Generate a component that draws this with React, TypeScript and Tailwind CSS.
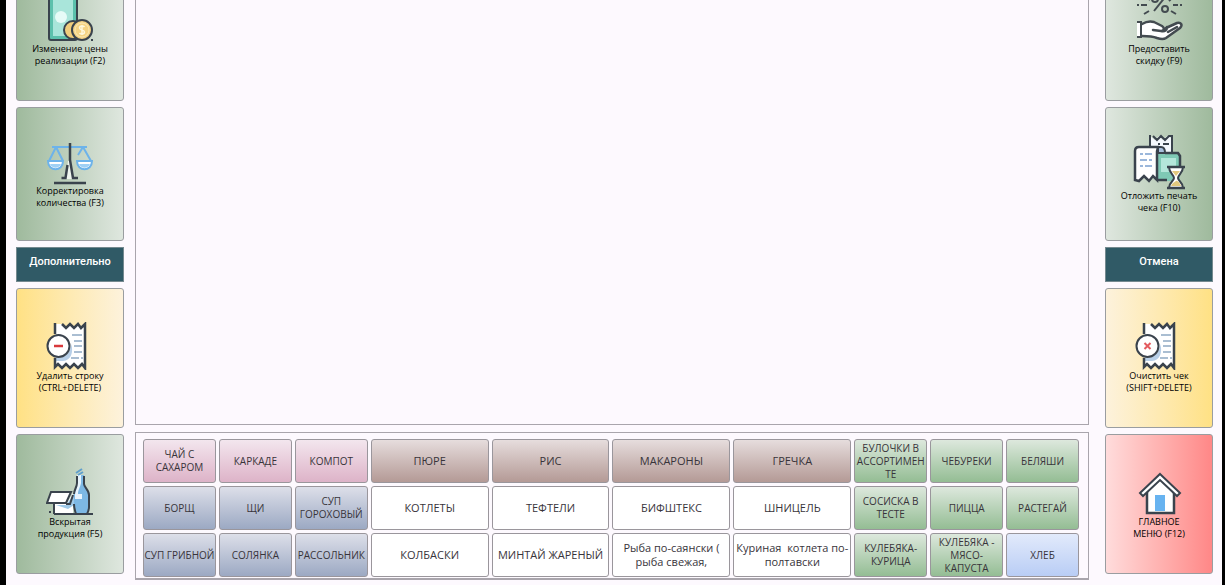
import type { ReactNode } from "react";
import clsx from "clsx";

const INK = "#3a434d";

function BanknoteIcon() {
  return (
    <svg width="48" height="48" viewBox="0 0 48 48" fill="none">
      <rect x="3" y="-4" width="28" height="49" rx="2" fill="#5cc0ac" stroke={INK} strokeWidth="2" />
      <rect x="7" y="0" width="20" height="41" fill="#a9e5da" />
      <circle cx="15" cy="22" r="6" fill="#e6fbf7" />
      <circle cx="27" cy="35" r="9" fill="#f0cd7c" stroke={INK} strokeWidth="2" />
      <circle cx="36" cy="35" r="10" fill="#f5d384" stroke={INK} strokeWidth="2" />
      <circle cx="36" cy="35" r="7" stroke="#fbe9b6" strokeWidth="1" />
      <path d="M38.500 32c-1-1.500-5-1.500-5 1s5 1.500 5 4-4 2.500-5 1M36 30v10" stroke="#fff8dc" strokeWidth="1.500" />
      <path d="M45 45h2" stroke={INK} strokeWidth="2" />
    </svg>
  );
}

function ScalesIcon() {
  return (
    <svg width="48" height="46" viewBox="0 0 48 46" fill="none">
      <path d="M6 8h35M10 8L3 22M10 8l7 14M37 8l-5 8M37 8l8 14" stroke="#6db3ea" strokeWidth="2" />
      <path d="M2 22h15c0 11-15 11-15 0zM31 22h15c0 11-15 11-15 0z" fill="#fff" stroke="#6db3ea" strokeWidth="2" />
      <path d="M4 25h11c-2 5-9 5-11 0zM33 25h11c-2 5-9 5-11 0z" fill="#9fd0f5" />
      <path d="M22 22h3l2 18h-7z" fill="#eef5ee" />
      <path d="M24 4v17l3 18h5M21.500 26l-2 13h-4" stroke={INK} strokeWidth="2.500" />
      <path d="M8 44h32" stroke={INK} strokeWidth="2.500" />
    </svg>
  );
}

function ReceiptIcon({ children }: { children: ReactNode }) {
  return (
    <svg width="48" height="48" viewBox="0 0 48 48" fill="none">
      <path d="M9 2h7l4 4 4-4 4 4 4-4 4 4 3-4v43l-4-3-4 3-4-3-4 3-4-3-4 3-3-3-3 2z" fill="#fff" />
      <path d="M10 36c10 0 15-6 15-14 3 7 0 17-8 17h-7z" fill="#b7cfe8" />
      <path d="M26 13h10M28 19h8M28 24h8M28 30h8M25 36h8M35 36h2" stroke="#8fa9c4" strokeWidth="1.500" />
      <path
        d="M9 1v11M16 2l4 4 4-4 4 4 4-4 3 4 4-4v44l-3-4-4 4-4-4-4 4-4-4-4 4-4-4-3 3v-9"
        stroke={INK}
        strokeWidth="2.500"
      />
      <circle cx="12.500" cy="24" r="11" fill="#fff" stroke={INK} strokeWidth="2" />
      {children}
    </svg>
  );
}

function BottleIcon() {
  return (
    <svg width="48" height="48" viewBox="0 0 48 48" fill="none">
      <path d="M8 35h13l6-10v21H8z" fill="#fff" />
      <path d="M10 37h10l8-11v11l-6 4z" fill="#9fcaea" />
      <path d="M5 24h20l-5 11H1z" fill="#fff" stroke={INK} strokeWidth="2" />
      <path d="M8 36v10M20 36h4l3-9" stroke={INK} strokeWidth="2" />
      <path d="M31 7h7v9c0 3 5 6 5 11v12c0 3-1 5-2 7H30c-1-3-2-5-2-8V26c0-4 3-7 3-11z" fill="#7db8e4" />
      <path d="M31 7h4v8c-1 5-3 7-3 11h4v5h-7v-5c0-4 2-7 2-11z" fill="#e8f4fd" />
      <path
        d="M31 8v7c0 4-3 7-3 11M38 8v8c0 3 5 6 5 11v12c0 3-1 5-2 7M28 36c0 4 1 7 2 10"
        stroke={INK}
        strokeWidth="2"
      />
      <path d="M30 5l6-4M32 7l5-3" stroke="#5f9fcc" strokeWidth="2" />
      <path d="M3 44h2M8 46h39" stroke={INK} strokeWidth="2" />
    </svg>
  );
}

function DiscountIcon() {
  return (
    <svg width="48" height="48" viewBox="0 0 48 48" fill="none" stroke="#434b50" strokeWidth="2">
      <path d="M2 10h2M6 10h6M38 10h5M45 10h2M9 19l5-3M36 16l5 3M12 2l3 3M37 3l-3 3" />
      <path d="M31 1L19 16" />
      <circle cx="20" cy="4" r="3" />
      <circle cx="30" cy="14" r="3" />
      <path d="M2 27h5v15H2z" fill="#fff" stroke="none" />
      <path d="M2 27h4v15H2" />
      <path
        d="M7 29c5-3 9-3 12-2l8 4 6 2 9-5c4-1 6 2 3 5L31 43c-3 2-6 1-9 0-5-2-10-2-15-2z"
        fill="#fff"
        stroke="none"
      />
      <path
        d="M7 29c5-3 9-3 12-2l8 4c3 2 2 5-1 5l-8-1M31 33l11-5c4-1 6 2 3 5L31 43c-3 2-6 1-9 0-5-2-10-2-15-2M26 36c4 1 6-1 6-4M33 37l9-5"
        strokeWidth="2.500"
        strokeLinecap="round"
        strokeLinejoin="round"
      />
    </svg>
  );
}

function PostponeIcon() {
  return (
    <svg width="52" height="56" viewBox="0 0 52 56" fill="none">
      <path d="M17 2l5 4 4-4 4 4 4-4 5 2v18H17z" fill="#f4f8fd" />
      <path d="M17 13V1M20 2l4 4 4-4 4 4 4-4h3v16M25 10h2M30 10h6" stroke={INK} strokeWidth="2" />
      <path d="M25 19h20l2 2v26H25z" fill="#7fc9b5" />
      <path d="M28 24h15v14H28z" fill="#b4e6da" />
      <path d="M32 19h13l2 3v10M25 46h9" stroke={INK} strokeWidth="2.500" />
      <path d="M25 13h3c3 0 4 3 4 6h-7z" fill="#a8bfdc" stroke={INK} strokeWidth="2" />
      <path
        d="M2 46V17c0-3 2-4 4-4h20c-2 1-2 3-2 6v27l-4-4-4 5-5-5-5 5z"
        fill="#fff"
        stroke={INK}
        strokeWidth="2.500"
      />
      <path d="M7 20h3M12 20h7M7 26h7M16 26h3M7 32h3M12 32h7" stroke="#7ba0d0" strokeWidth="1.500" />
      <path
        d="M36 33h14c0 6-5 8-5 11s5 4 5 10H36c0-6 5-7 5-10s-5-5-5-11z"
        fill="#fff"
        stroke={INK}
        strokeWidth="2"
      />
      <path d="M39 37h8l-4 5zM38 52c1-3 4-4 5-5s4 2 5 5z" fill="#e2c87e" />
      <path d="M34 33h18M34 54h18" stroke={INK} strokeWidth="2.500" />
    </svg>
  );
}

function HomeIcon() {
  return (
    <svg width="48" height="48" viewBox="0 0 48 48" fill="none">
      <path d="M12 22L25 11l14 11v23H12z" fill="#fff" stroke={INK} strokeWidth="2.500" />
      <path d="M25 6l20 19-3 3-17-16L8 28l-3-3z" fill="#fff" stroke={INK} strokeWidth="2" />
      <rect x="20" y="27" width="10" height="16" fill="#67b3f0" />
    </svg>
  );
}

const tones = {
  greenLeft: "bg-linear-to-r from-[#9fba9d] to-[#dfe7df]",
  greenRight: "bg-linear-to-l from-[#9fba9d] to-[#dfe7df]",
  yellowLeft: "bg-linear-to-r from-[#ffe184] to-[#fdf2dc]",
  yellowRight: "bg-linear-to-l from-[#ffe184] to-[#fdf2dc]",
  red: "bg-linear-to-l from-[#ff8787] to-[#ffdcdc]",
};

interface ActionProps {
  tone: keyof typeof tones;
  icon: ReactNode;
  lines: [string, string];
  short?: boolean;
}

function Action({ tone, icon, lines, short }: ActionProps) {
  return (
    <button
      type="button"
      className={clsx(
        "flex shrink-0 flex-col items-center justify-center rounded-[3px] border border-[#9a9da0] text-[9px] leading-[12px] font-medium text-black",
        short ? "h-[134px]" : "h-[140px]",
        tones[tone],
      )}
    >
      {icon}
      <span>{lines[0]}</span>
      <span>{lines[1]}</span>
    </button>
  );
}

function SectionTitle({ children }: { children: ReactNode }) {
  return (
    <h2 className="flex h-[35px] shrink-0 items-center justify-center border border-[#75898f] bg-[#305a66] pb-1 font-['Roboto',sans-serif] text-[11px] font-medium text-white">
      {children}
    </h2>
  );
}

const dishTones = {
  pink: "bg-linear-to-b from-[#f3e6ee] to-[#ddb3c8] text-[10px] leading-[13px]",
  blue: "bg-linear-to-b from-[#dddfe9] to-[#9ca9c3] text-[10px] leading-[13px]",
  brown: "bg-linear-to-b from-[#e6dddd] to-[#b49a96] text-[11px] leading-[14px]",
  white: "bg-white text-[11px] leading-[14px]",
  green: "bg-linear-to-b from-[#dde8dd] to-[#94bd94] text-[10px] leading-[13px]",
  sky: "bg-linear-to-b from-[#e2eafb] to-[#b9cdf5] text-[10px] leading-[13px]",
};

const dishes: { name: string; tone: keyof typeof dishTones }[] = [
  { name: "ЧАЙ С\nСАХАРОМ", tone: "pink" },
  { name: "КАРКАДЕ", tone: "pink" },
  { name: "КОМПОТ", tone: "pink" },
  { name: "ПЮРЕ", tone: "brown" },
  { name: "РИС", tone: "brown" },
  { name: "МАКАРОНЫ", tone: "brown" },
  { name: "ГРЕЧКА", tone: "brown" },
  { name: "БУЛОЧКИ В\nАССОРТИМЕН\nТЕ", tone: "green" },
  { name: "ЧЕБУРЕКИ", tone: "green" },
  { name: "БЕЛЯШИ", tone: "green" },
  { name: "БОРЩ", tone: "blue" },
  { name: "ЩИ", tone: "blue" },
  { name: "СУП\nГОРОХОВЫЙ", tone: "blue" },
  { name: "КОТЛЕТЫ", tone: "white" },
  { name: "ТЕФТЕЛИ", tone: "white" },
  { name: "БИФШТЕКС", tone: "white" },
  { name: "ШНИЦЕЛЬ", tone: "white" },
  { name: "СОСИСКА В\nТЕСТЕ", tone: "green" },
  { name: "ПИЦЦА", tone: "green" },
  { name: "РАСТЕГАЙ", tone: "green" },
  { name: "СУП ГРИБНОЙ", tone: "blue" },
  { name: "СОЛЯНКА", tone: "blue" },
  { name: "РАССОЛЬНИК", tone: "blue" },
  { name: "КОЛБАСКИ", tone: "white" },
  { name: "МИНТАЙ ЖАРЕНЫЙ", tone: "white" },
  { name: "Рыба по-саянски (\nрыба свежая,", tone: "white" },
  { name: "Куриная  котлета по-\nполтавски", tone: "white" },
  { name: "КУЛЕБЯКА-\nКУРИЦА", tone: "green" },
  { name: "КУЛЕБЯКА -\nМЯСО-\nКАПУСТА", tone: "green" },
  { name: "ХЛЕБ", tone: "sky" },
];

export default function App() {
  return (
    <div className="flex h-screen flex-col overflow-hidden bg-[#fdf9fe] font-['Open_Sans','Noto_Sans',sans-serif]">
      <div className="-mt-[39px] flex flex-1 border-r-[3px] border-l-[6px] border-black pr-[9px] pl-[10px]">
        <aside className="flex w-[108px] shrink-0 flex-col gap-[6px]">
          <Action tone="greenLeft" icon={<BanknoteIcon />} lines={["Изменение цены", "реализации (F2)"]} />
          <Action short tone="greenLeft" icon={<ScalesIcon />} lines={["Корректировка", "количества (F3)"]} />
          <SectionTitle>Дополнительно</SectionTitle>
          <Action
            tone="yellowLeft"
            icon={
              <ReceiptIcon>
                <path d="M8 24h9" stroke="#d8393c" strokeWidth="2.500" />
              </ReceiptIcon>
            }
            lines={["Удалить строку", "(CTRL+DELETE)"]}
          />
          <Action tone="greenLeft" icon={<BottleIcon />} lines={["Вскрытая", "продукция (F5)"]} />
        </aside>

        <main className="mr-4 ml-[11px] flex min-w-0 flex-1 flex-col gap-[7px] pb-[5px]">
          <section className="flex-1 border border-[#a9a5ac]" />

          <section className="grid grid-cols-[repeat(3,minmax(0,73fr))_repeat(4,minmax(0,118fr))_repeat(3,minmax(0,73fr))] gap-[3px] border border-b-2 border-[#a9a5ac] pt-[6px] pr-[9px] pb-px pl-[7px]">
            {dishes.map((dish) => (
              <button
                key={dish.name}
                type="button"
                className={clsx(
                  "flex h-11 items-center justify-center rounded-[3px] border border-[#9a969c] text-center whitespace-pre text-[#38343a]",
                  dishTones[dish.tone],
                )}
              >
                {dish.name}
              </button>
            ))}
          </section>
        </main>

        <aside className="flex w-[108px] shrink-0 flex-col gap-[6px]">
          <Action tone="greenRight" icon={<DiscountIcon />} lines={["Предоставить", "скидку (F9)"]} />
          <Action short tone="greenRight" icon={<PostponeIcon />} lines={["Отложить печать", "чека (F10)"]} />
          <SectionTitle>Отмена</SectionTitle>
          <Action
            tone="yellowRight"
            icon={
              <ReceiptIcon>
                <path d="M9.500 21l6 6M15.500 21l-6 6" stroke="#e35a5e" strokeWidth="2" />
              </ReceiptIcon>
            }
            lines={["Очистить чек", "(SHIFT+DELETE)"]}
          />
          <Action tone="red" icon={<HomeIcon />} lines={["ГЛАВНОЕ", "МЕНЮ (F12)"]} />
        </aside>
      </div>
    </div>
  );
}
